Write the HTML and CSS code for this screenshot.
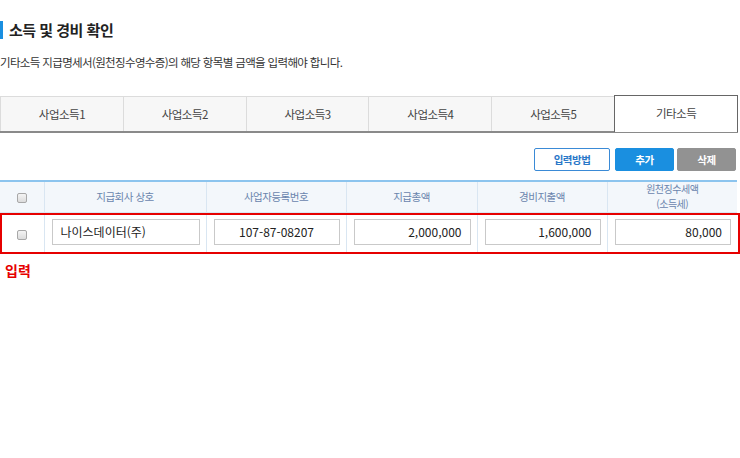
FILE: index.html
```html
<!DOCTYPE html>
<html lang="ko">
<head>
<meta charset="utf-8">
<link rel="stylesheet" href="styles.css">
</head>
<body>
<div class="page">
  <h2 class="title">소득 및 경비 확인</h2>
  <p class="desc">기타소득 지급명세서(원천징수영수증)의 해당 항목별 금액을 입력해야 합니다.</p>
  <ul class="tabs">
    <li class="tab">사업소득1</li>
    <li class="tab">사업소득2</li>
    <li class="tab">사업소득3</li>
    <li class="tab">사업소득4</li>
    <li class="tab">사업소득5</li>
    <li class="tab active">기타소득</li>
  </ul>
  <div class="actions">
    <button class="btn btn-outline">입력방법</button>
    <button class="btn btn-blue">추가</button>
    <button class="btn btn-gray">삭제</button>
  </div>
  <div class="table-wrap">
    <table class="grid">
      <colgroup>
        <col class="c0"><col class="c1"><col class="c2"><col class="c3"><col class="c4"><col class="c5">
      </colgroup>
      <thead>
        <tr>
          <th><span class="chk"></span></th>
          <th>지급회사 상호</th>
          <th>사업자등록번호</th>
          <th>지급총액</th>
          <th>경비지출액</th>
          <th class="two">원천징수세액<br>(소득세)</th>
        </tr>
      </thead>
      <tbody>
        <tr class="hl">
          <td><span class="chk"></span></td>
          <td><div class="inp left">나이스데이터(주)</div></td>
          <td><div class="inp center">107-87-08207</div></td>
          <td><div class="inp right">2,000,000</div></td>
          <td><div class="inp right">1,600,000</div></td>
          <td><div class="inp right">80,000</div></td>
        </tr>
      </tbody>
    </table>
    <div class="redbox"></div>
  </div>
  <p class="note">입력</p>
</div>
</body>
</html>
```
FILE: styles.css
```css
* { box-sizing: border-box; }
html, body { margin: 0; padding: 0; background: #fff; }
body {
  font-family: "Noto Sans CJK KR", "Noto Sans", sans-serif;
  color: #333;
  width: 740px;
  height: 458px;
  overflow: hidden;
}
.page { padding-top: 21px; }
.title {
  margin: 0;
  height: 18px;
  line-height: 18px;
  font-size: 15px;
  font-weight: 700;
  color: #222;
  border-left: 3px solid #1a8fe0;
  padding-left: 6px;
  letter-spacing: -0.5px;
}
.desc {
  margin: 14px 0 0 0;
  font-size: 11.5px;
  line-height: 18px;
  color: #333;
  letter-spacing: -0.65px;
}
.tabs {
  list-style: none;
  margin: 25px 0 0 0;
  padding: 0;
  display: flex;
  width: 738px;
  border-bottom: 2px solid #8a8a8a;
}
.tab {
  flex: 1;
  height: 35px;
  line-height: 34px;
  text-align: center;
  font-size: 11.5px;
  color: #444;
  background: #f7f7f7;
  border-top: 1px solid #dcdcdc;
  border-left: 1px solid #dcdcdc;
  letter-spacing: -0.5px;
}
.tab.active {
  background: #fff;
  border: 1px solid #666;
  border-bottom: none;
  margin-bottom: -2px;
  height: 37px;
  margin-top: -1px;
}
.actions {
  display: flex;
  justify-content: flex-end;
  gap: 3px;
  margin-top: 15px;
  padding-right: 4px;
}
.btn {
  font-family: inherit;
  font-size: 10.5px;
  font-weight: 700;
  height: 23px;
  border-radius: 2px;
  padding: 0;
  letter-spacing: -0.5px;
}
.btn-outline { width: 76px; background: #fff; color: #2b78c8; border: 1px solid #3a8ad6; margin-right: 2px; }
.btn-blue { width: 59px; background: #1a8fe0; color: #fff; border: 1px solid #1a8fe0; }
.btn-gray { width: 59px; background: #929292; color: #fff; border: 1px solid #929292; }
.table-wrap { position: relative; margin-top: 9px; width: 738px; }
.grid {
  width: 737px;
  border-collapse: collapse;
  table-layout: fixed;
  border-top: 2px solid #8cc4ee;
}
.c0 { width: 44px; }
.c1 { width: 162px; }
.c2 { width: 140px; }
.c3 { width: 131px; }
.c4 { width: 130px; }
.c5 { width: 130px; }
.grid th {
  height: 31px;
  background: #f3f7fb;
  color: #6a85ad;
  font-size: 10.5px;
  font-weight: 400;
  line-height: 14px;
  text-align: center;
  border-left: 1px solid #d9e6f2;
  border-bottom: 1px solid #d9e6f2;
  letter-spacing: -0.5px;
  padding: 0;
}
.grid th.two { font-size: 10px; line-height: 14.5px; }
.grid th:first-child, .grid td:first-child { border-left: none; }
.grid td {
  height: 40px;
  padding: 0 6px 0 7px;
  border-left: 1px solid #d9e6f2;
  text-align: center;
}
.grid td:first-child { padding: 0; }
.chk {
  display: inline-block;
  width: 10px;
  height: 10px;
  border: 1px solid #a8a8a8;
  border-radius: 2px;
  background: linear-gradient(#f4f4f4, #dcdcdc);
  vertical-align: middle;
}
.inp {
  height: 26px;
  line-height: 24px;
  border: 1px solid #c9c9c9;
  font-size: 12px;
  color: #222;
  padding: 0 8px;
  background: #fff;
}
.inp.left { text-align: left; }
.inp.center { text-align: center; }
.inp.right { text-align: right; }
.redbox {
  position: absolute;
  left: 0;
  top: 33px;
  width: 740px;
  height: 41px;
  border: 2px solid #e60000;
  pointer-events: none;
}
.note {
  margin: 8px 0 0 5px;
  color: #e60000;
  font-size: 14px;
  font-weight: 700;
  line-height: 20px;
}
```
